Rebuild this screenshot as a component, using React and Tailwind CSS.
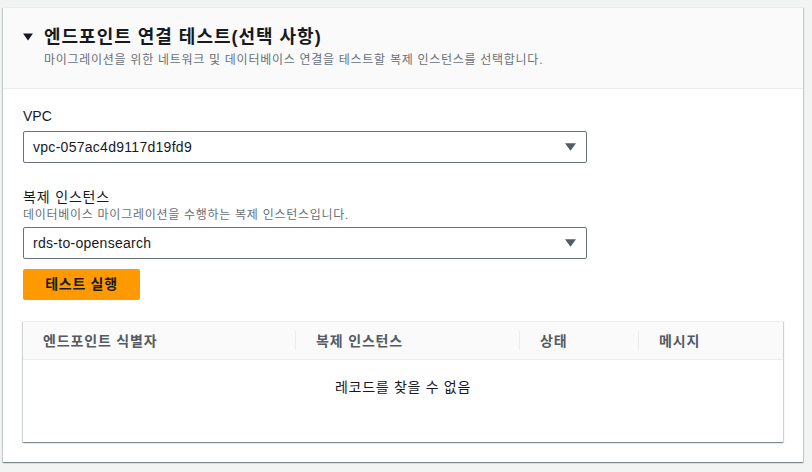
import React from "react";

const font = {
  fontFamily: '"Liberation Sans", "Noto Sans CJK KR", sans-serif',
};

const columns = [
  { label: "엔드포인트 식별자", width: "w-[272px]" },
  { label: "복제 인스턴스", width: "w-[224px]" },
  { label: "상태", width: "w-[119px]" },
  { label: "메시지", width: "flex-1" },
];

const Caret = ({ className }) => (
  <svg viewBox="0 0 10 7" className={className}>
    <path d="M0 0 L10 0 L5 7 Z" fill="currentColor" />
  </svg>
);

const SelectBox = ({ value }) => (
  <div className="w-[564px] h-[32px] border border-[#687078] rounded-[2px] bg-white flex items-center justify-between pl-[9px] pr-[10px]">
    <span className="text-[14px] leading-[20px] text-[#16191f] tracking-[0.02em]">{value}</span>
    <Caret className="w-[11px] h-[8px] text-[#545b64]" />
  </div>
);

const EndpointTest = () => {
  return (
    <div className="bg-[#f2f3f3] min-h-screen pt-[7px] pl-[3px]" style={font}>
      <div className="w-[800px] bg-white border-t border-[#eaeded] shadow-[0_1px_1px_0_rgba(0,28,36,0.3),1px_1px_1px_0_rgba(0,28,36,0.15),-1px_1px_1px_0_rgba(0,28,36,0.15)]">
        {/* header */}
        <div className="bg-[#fafafa] border-b border-[#eaeded] h-[81px] pl-[20px] pt-[16px]">
          <div className="flex items-center h-[26px]">
            <Caret className="w-[10px] h-[8px] text-[#16191f] mr-[11px]" />
            <h2 className="text-[18px] leading-[26px] font-bold text-[#16191f] tracking-[0.055em]">
              엔드포인트 연결 테스트(선택 사항)
            </h2>
          </div>
          <p className="ml-[21px] mt-[2px] text-[12px] leading-[16px] text-[#687078] tracking-[0.06em]">
            마이그레이션을 위한 네트워크 및 데이터베이스 연결을 테스트할 복제 인스턴스를 선택합니다.
          </p>
        </div>

        {/* body */}
        <div className="px-[20px] pt-[17px] pb-[20px]">
          <div className="text-[14px] leading-[20px] text-[#16191f]">VPC</div>
          <div className="mt-[5px]">
            <SelectBox value="vpc-057ac4d9117d19fd9" />
          </div>

          <div className="mt-[24px] text-[14px] leading-[20px] text-[#16191f] tracking-[0.06em]">
            복제 인스턴스
          </div>
          <div className="text-[12px] leading-[16px] text-[#687078] tracking-[0.06em]">
            데이터베이스 마이그레이션을 수행하는 복제 인스턴스입니다.
          </div>
          <div className="mt-[4px]">
            <SelectBox value="rds-to-opensearch" />
          </div>

          <button className="mt-[10px] w-[117px] h-[31px] bg-[#ff9900] rounded-[2px] text-[14px] font-bold text-[#16191f] tracking-[0.05em]">
            테스트 실행
          </button>

          {/* table */}
          <div className="mt-[21px] w-[760px] h-[121px] bg-white border-t border-[#eaeded] shadow-[0_1px_1px_0_rgba(0,28,36,0.3),1px_1px_1px_0_rgba(0,28,36,0.15),-1px_1px_1px_0_rgba(0,28,36,0.15)]">
            <div className="flex h-[38px] bg-[#fafafa] border-b border-[#eaeded]">
              {columns.map((col, i) => (
                <div key={col.label} className={`${col.width} flex items-center h-full`}>
                  {i > 0 && <div className="w-px h-[20px] bg-[#eaeded]" />}
                  <span className="pl-[20px] text-[14px] leading-[20px] font-bold text-[#545b64] tracking-[0.06em]">
                    {col.label}
                  </span>
                </div>
              ))}
            </div>
            <div className="pt-[17px] text-center text-[14px] leading-[20px] text-[#16191f] tracking-[0.05em]">
              레코드를 찾을 수 없음
            </div>
          </div>
        </div>
      </div>
    </div>
  );
};

export default EndpointTest;
